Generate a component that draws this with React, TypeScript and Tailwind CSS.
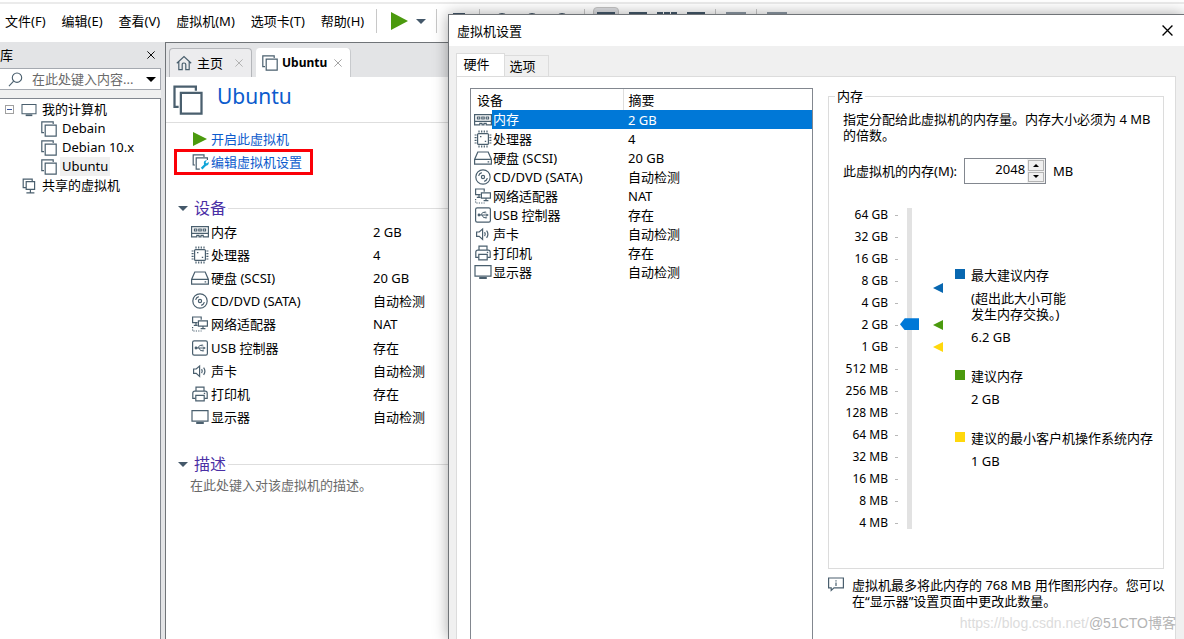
import React from 'react';

type IconProps = { className?: string };

const Svg: React.FC<IconProps & { box?: string; children: React.ReactNode }> = ({ className = 'h-4 w-[18px]', box = '0 0 18 16', children }) => (
  <svg viewBox={box} className={`shrink-0 ${className}`} fill="none" stroke="#4a5f6e" strokeWidth="1.2" aria-hidden="true">
    {children}
  </svg>
);

const MemoryIcon = () => (
  <Svg>
    <path d="M.6 2.6h16.8v10.2h-5.2v-1.4H10v1.4H8v-1.4H5.8v1.4H.6z" />
    <path d="M3.4 5h2.4v2H3.4zM7.8 5h2.4v2H7.8zM12.2 5h2.4v2h-2.4zM.6 9.4h16.8" />
  </Svg>
);

const CpuIcon = () => (
  <Svg box="0 0 18 18" className="h-[18px] w-[18px]">
    <rect x="3.6" y="3.6" width="10.8" height="10.8" rx="1" />
    <path d="M5 .6v2M7.7 .6v2M10.3 .6v2M13 .6v2M5 15.400v2M7.700 15.400v2M10.300 15.400v2M13 15.400v2M.6 5h2M.6 7.700h2M.6 10.300h2M.6 13h2M15.400 5h2M15.400 7.700h2M15.400 10.300h2M15.400 13h2" />
    <path d="M6 6.600h1.400M10.800 11.400h1.400" strokeWidth="1.400" />
  </Svg>
);

const DiskIcon = () => (
  <Svg>
    <path d="M3.8 2h10.4l3.2 7.400v4.800H.6V9.400zM.6 9.400h16.800M13.600 11.800h1.600" />
  </Svg>
);

const DiscIcon = () => (
  <Svg>
    <circle cx="9" cy="8" r="7.2" />
    <circle cx="9" cy="8" r="1.6" />
    <path d="M4.6 6.8a4.6 4.6 0 0 1 3.2-3.2M13.4 9.2a4.6 4.6 0 0 1-3.2 3.2" />
  </Svg>
);

const NetworkIcon = () => (
  <Svg>
    <path d="M6.600 6.600H1.600V1h8.600v2.800M5 6.600v2.600M2.800 9.400h3.800" />
    <path d="M7.4 4.8h9v5.400h-9zM12 10.200v2.400M9.600 12.600h4.800" />
    <path d="M1.600 11v4h9" strokeDasharray="1.2 1.2" />
  </Svg>
);

const UsbIcon = () => (
  <Svg>
    <rect x="1.6" y=".8" width="14.8" height="14.4" rx="1.6" />
    <path d="M5 8h8.6M6.8 8l2-2.6h2M8 8l1.6 2.6h2" strokeWidth="1" />
    <circle cx="5" cy="8" r=".8" fill="#4a5f6e" />
    <path d="M12.6 6.8L14.4 8l-1.800 1.200z" fill="#4a5f6e" strokeWidth=".4" />
    <path d="M10.600 4.800h1.200V6h-1.200zM11.400 10h1.200v1.200h-1.200z" strokeWidth=".6" />
  </Svg>
);

const SoundIcon = () => (
  <Svg>
    <path d="M2.600 6h2.600l3.400-3v10.400l-3.400-3H2.600zM10.600 6.200c.8 1.200.8 2.800 0 4M12.600 4.600c1.600 2.200 1.600 5 0 7.200" />
  </Svg>
);

const PrinterIcon = () => (
  <Svg>
    <path d="M5 5V1.200h8V5M4.600 12.400H1.800V7.200c0-1.200.8-2 2-2h10.400c1.200 0 2 .8 2 2v5.200h-2.800" />
    <path d="M4.800 9.400h8.400v5.400H4.800zM12.800 7.300h1.400" />
  </Svg>
);

const DisplayIcon: React.FC<IconProps> = ({ className }) => (
  <Svg className={className}>
    <path d="M1 1.600h16v10.600H1z" />
    <path d="M5.200 14h7.600" strokeWidth="2" />
  </Svg>
);

const MachineIcon: React.FC<IconProps> = ({ className = 'h-4 w-4' }) => (
  <Svg box="0 0 16 16" className={className}>
    <path d="M3 11.600H.8V.8h11.400V3" />
    <path d="M4.200 4.200h11v11h-11z" />
  </Svg>
);

const EditMachineIcon = () => (
  <Svg box="0 0 18 16" className="h-4 w-[18px]">
    <path d="M3 11H1.200V.8H12V3" />
    <path d="M15.400 6V3.800H4.200v11.400h3.600" />
    <path d="M9.600 14.600l4.200-4.200" stroke="#12a5d8" strokeWidth="2.200" />
    <path d="M16.600 7.800l-1.800 1.600-1.400-1.200 1.400-1.800c-1.600-.2-3 .8-3 2.600s1.200 2.800 2.600 2.600c1.600 0 2.800-1.800 2.200-3.800z" fill="#12a5d8" stroke="none" />
  </Svg>
);

const SharedIcon = () => (
  <Svg box="0 0 16 16" className="h-4 w-4">
    <path d="M4.600 9.600H2.200V1.200h9v1.800M5.200 3.600h8.400v7.800H5.200zM9.400 11.400v3.200M5.400 14.800h8" />
  </Svg>
);

const HomeIcon = () => (
  <Svg box="0 0 16 16" className="h-4 w-4">
    <path d="M.8 8.200L8 1.600l7.200 6.600M2.800 6.600v8h3.400V9.400c0-1 .8-1.400 1.800-1.400s1.800.4 1.800 1.400v5.200h3.400v-8" />
  </Svg>
);

const SearchIcon = () => (
  <Svg box="0 0 16 16" className="h-[15px] w-[15px]">
    <circle cx="9.600" cy="6" r="5" />
    <path d="M6 9.800L1 15" />
  </Svg>
);

const NoteIcon = () => (
  <Svg box="0 0 16 15" className="h-[15px] w-4">
    <path d="M.6 1h14.800v9.800H6L3.200 13.400v-2.600H.6z" />
    <path d="M8 3.200v1.200M8 5.400v3.600" />
  </Svg>
);

const CloseIcon: React.FC<IconProps> = ({ className }) => (
  <svg viewBox="0 0 10 10" className={`shrink-0 ${className}`} fill="none" stroke="currentColor" strokeWidth="1.2" aria-hidden="true">
    <path d="M.5.5l9 9M9.500.5l-9 9" />
  </svg>
);

const PlayIcon: React.FC<IconProps> = ({ className }) => (
  <svg viewBox="0 0 16 16" preserveAspectRatio="none" className={`shrink-0 ${className}`} aria-hidden="true">
    <path d="M0 0l16 8-16 8z" fill="#4b9a0e" />
  </svg>
);

const CaretIcon: React.FC<IconProps> = ({ className = 'h-[5px] w-[10px] text-[#44586a]' }) => (
  <svg viewBox="0 0 10 5" className={`shrink-0 ${className}`} aria-hidden="true">
    <path d="M0 0h10L5 5z" fill="currentColor" />
  </svg>
);

const menus = ['文件(F)', '编辑(E)', '查看(V)', '虚拟机(M)', '选项卡(T)', '帮助(H)'];

const devices = [
  { icon: <MemoryIcon />, name: '内存', summary: '2 GB' },
  { icon: <CpuIcon />, name: '处理器', summary: '4' },
  { icon: <DiskIcon />, name: '硬盘 (SCSI)', summary: '20 GB' },
  { icon: <DiscIcon />, name: 'CD/DVD (SATA)', summary: '自动检测' },
  { icon: <NetworkIcon />, name: '网络适配器', summary: 'NAT' },
  { icon: <UsbIcon />, name: 'USB 控制器', summary: '存在' },
  { icon: <SoundIcon />, name: '声卡', summary: '自动检测' },
  { icon: <PrinterIcon />, name: '打印机', summary: '存在' },
  { icon: <DisplayIcon />, name: '显示器', summary: '自动检测' },
];

const sizes = ['64 GB', '32 GB', '16 GB', '8 GB', '4 GB', '2 GB', '1 GB', '512 MB', '256 MB', '128 MB', '64 MB', '32 MB', '16 MB', '8 MB', '4 MB'];

// step is the number of scale rows below 64 GB
const markers = [
  { step: 3.3, color: 'text-[#0867b0]' },
  { step: 5, color: 'text-[#4b9a0e]' },
  { step: 6, color: 'text-[#ffd80c]' },
];

const hints = [
  { color: 'bg-[#0867b0]', title: '最大建议内存', note: ['(超出此大小可能', '发生内存交换。)'], value: '6.2 GB' },
  { color: 'bg-[#4b9a0e]', title: '建议内存', note: [], value: '2 GB' },
  { color: 'bg-[#ffd80c]', title: '建议的最小客户机操作系统内存', note: [], value: '1 GB' },
];

const Separator = () => <div className="h-6 w-px bg-[#c8c8c8]" />;

const MenuBar = () => (
  <header className="shrink-0 bg-white pt-[2px]">
    <div className="h-[2px] bg-[#ebebeb]" />
    <div className="flex h-[38px] items-center pb-1 pl-[5px]">
      <nav className="flex gap-4">
        {menus.map((menu) => (
          <button key={menu} type="button">{menu}</button>
        ))}
      </nav>
      <div className="ml-3 flex items-center">
        <Separator />
        <button type="button" aria-label="开启" className="ml-[14px]"><PlayIcon className="h-[18px] w-[17px]" /></button>
        <button type="button" aria-label="电源选项" className="ml-2"><CaretIcon /></button>
        <div className="ml-[10px]"><Separator /></div>
      </div>
      {/* rest of the toolbar, mostly covered by the settings window */}
      <div className="ml-4 flex items-center gap-[14px] text-[#44586a]">
        <div className="h-4 w-3 border border-current" />
        <Separator />
        <div className="h-4 w-4 rounded-full border border-current" />
        <div className="h-4 w-4 rounded-full border border-current" />
        <div className="h-4 w-4 rounded-full border border-current" />
        <Separator />
      </div>
      <div className="ml-2 flex items-center gap-[10px] text-[#44586a]">
        <div className="flex h-7 w-[26px] items-center justify-center rounded-sm border border-[#c4c4c4] bg-[#dcdde0]">
          <div className="h-[18px] w-[18px] border-2 border-current" />
        </div>
        <div className="h-[18px] w-[18px] border-2 border-current" />
        <div className="h-[18px] w-5 border-2 border-dashed border-current" />
        <div className="h-[18px] w-[18px] border-2 border-current" />
        <Separator />
        <div className="h-[18px] w-5 border-2 border-[#8d99a4]" />
        <Separator />
        <div className="h-[18px] w-5 border-2 border-[#8d99a4]" />
      </div>
    </div>
  </header>
);

const Library = () => (
  <aside className="flex w-[165px] shrink-0 flex-col bg-[#e3e4e6] pr-1">
    <div className="flex h-[26px] items-center justify-between pr-[6px]">
      <h2>库</h2>
      <button type="button" aria-label="关闭库"><CloseIcon className="h-2 w-2" /></button>
    </div>
    <div className="flex h-[22px] items-center border border-l-0 border-[#a5a9b0] bg-white pl-2 pr-1">
      <SearchIcon />
      <input aria-label="搜索" placeholder="在此处键入内容..." className="ml-[9px] w-0 flex-1 outline-none placeholder:text-[#6a6a6a]" />
      <button type="button" aria-label="筛选"><CaretIcon className="h-[5px] w-[10px] text-black" /></button>
    </div>
    <div className="h-2 bg-[#f0f0f0]" />
    <ul className="flex-1 border-r border-t border-[#82878f] bg-white pt-px leading-[19px]">
      <li>
        <div className="flex items-center pl-[5px]">
          <button type="button" aria-label="折叠" className="flex h-[9px] w-[9px] items-center justify-center border border-[#a0a0a0]">
            <span className="h-px w-[5px] bg-[#3a56a0]" />
          </button>
          <DisplayIcon className="ml-[7px] h-[14px] w-4" />
          <span className="ml-[5px]">我的计算机</span>
        </div>
        <ul>
          {['Debain', 'Debian 10.x', 'Ubuntu'].map((name) => (
            <li key={name} className="flex items-center pl-[41px]">
              <MachineIcon />
              <span className={name === 'Ubuntu' ? 'ml-[3px] bg-[#f0f0f0] px-[2px]' : 'ml-[3px] px-[2px]'}>{name}</span>
            </li>
          ))}
        </ul>
      </li>
      <li className="flex items-center pl-[21px]">
        <SharedIcon />
        <span className="ml-[5px]">共享的虚拟机</span>
      </li>
    </ul>
  </aside>
);

const SectionTitle: React.FC<{ title: string }> = ({ title }) => (
  <h2 className="flex h-6 items-center pl-3 text-base text-[#4a2fa5]">
    <CaretIcon />
    <span className="ml-[6px]">{title}</span>
    <span className="ml-[2px] h-px flex-1 bg-[#dedede]" />
  </h2>
);

const MachinePage = () => (
  <main className="flex min-w-0 flex-1 flex-col border-l border-t border-[#707478] bg-white">
    <div className="flex h-[34px] items-end bg-[#e3e4e6] pl-[3px]">
      <div className="flex h-[29px] w-[83px] items-center rounded-t border border-b-0 border-[#b4b6ba] bg-[#ececee] pl-[6px] pr-2">
        <HomeIcon />
        <span className="ml-[5px] flex-1">主页</span>
        <button type="button" aria-label="关闭主页" className="text-[#b0b0b0]"><CloseIcon className="h-2 w-2" /></button>
      </div>
      <div className="ml-1 flex h-[29px] w-[95px] items-center rounded-t border-r border-[#c8cacd] bg-white pl-[6px] pr-2">
        <MachineIcon />
        <span className="ml-1 flex-1 text-xs font-bold">Ubuntu</span>
        <button type="button" aria-label="关闭 Ubuntu" className="text-[#a0a0a0]"><CloseIcon className="h-2 w-2" /></button>
      </div>
    </div>
    <div className="flex h-[46px] items-center border-b border-[#dedede] pl-[7px]">
      <MachineIcon className="h-[30px] w-[30px]" />
      <h1 className="ml-[14px] pb-2 text-[21px] leading-7 text-[#0c5bcd]">Ubuntu</h1>
    </div>
    <div className="flex flex-col items-start pl-2 pt-[5px] text-[#0c5bcd]">
      <a href="#start" className="flex h-[21px] items-center pl-[19px]">
        <PlayIcon className="h-[14px] w-[14px]" />
        <span className="ml-1">开启此虚拟机</span>
      </a>
      <a href="#edit" className="flex h-[26px] items-center border-[3px] border-[#fb0007] pb-px pl-[15px] pr-2">
        <EditMachineIcon />
        <span className="ml-px">编辑虚拟机设置</span>
      </a>
    </div>
    <section className="mt-[21px]">
      <SectionTitle title="设备" />
      <table className="h-[209px] w-full table-fixed">
        <tbody>
          {devices.map((device) => (
            <tr key={device.name}>
              <td className="w-[207px] p-0 pl-[25px]">
                <div className="flex items-center gap-[2px]">{device.icon}{device.name}</div>
              </td>
              <td className="p-0">{device.summary}</td>
            </tr>
          ))}
        </tbody>
      </table>
    </section>
    <section className="mt-[23px]">
      <SectionTitle title="描述" />
      <p className="pl-6 text-[#6a6a6a]">在此处键入对该虚拟机的描述。</p>
    </section>
  </main>
);

const DeviceTable = () => (
  <div className="w-[343px] shrink-0 border border-b-0 border-[#82878f]">
    <table className="w-full table-fixed">
      <thead>
        <tr className="h-[21px] text-left">
          <th className="w-[152px] border-r border-[#dedede] p-0 pl-[6px] font-normal">设备</th>
          <th className="p-0 pl-[5px] font-normal">摘要</th>
        </tr>
      </thead>
      <tbody>
        {devices.map((device, index) => (
          <tr key={device.name} className={index === 0 ? 'h-[19px] text-white' : 'h-[19px]'}>
            <td className="p-0 pl-[3px]">
              <div className="flex h-[19px] items-center">
                {device.icon}
                <span className={index === 0 ? 'flex-1 bg-[#0078d7] pl-px leading-[19px]' : 'pl-px'}>{device.name}</span>
              </div>
            </td>
            <td className={index === 0 ? 'bg-[#0078d7] p-0 pl-[5px]' : 'p-0 pl-[5px]'}>{device.summary}</td>
          </tr>
        ))}
      </tbody>
    </table>
  </div>
);

const MemoryPanel = () => (
  <div className="min-w-0 flex-1 leading-4">
    <fieldset className="mr-[3px] border border-[#dcdcdc] pb-[34px] pl-[14px] pr-[10px]">
      <legend className="-ml-2 px-[2px]">内存</legend>
      <p className="mt-[7px]">指定分配给此虚拟机的内存量。内存大小必须为 4 MB 的倍数。</p>
      <div className="mt-[15px] flex items-center">
        <label htmlFor="memory">此虚拟机的内存(M):</label>
        <div className="ml-[7px] flex h-[26px] w-[82px] border border-[#82878f]">
          <input id="memory" defaultValue="2048" className="w-0 flex-1 pb-1 pr-[2px] text-right outline-none" />
          <div className="flex w-[18px] flex-col gap-px bg-[#f0f0f0] p-px">
            <button type="button" aria-label="增加" className="flex flex-1 items-center justify-center border border-[#b4b4b4]">
              <CaretIcon className="h-[3px] w-[6px] rotate-180" />
            </button>
            <button type="button" aria-label="减少" className="flex flex-1 items-center justify-center border border-[#b4b4b4]">
              <CaretIcon className="h-[3px] w-[6px]" />
            </button>
          </div>
        </div>
        <span className="ml-[7px]">MB</span>
      </div>
      <div className="mt-5 flex">
        <ul className="text-xs">
          {sizes.map((size) => (
            <li key={size} className="flex h-[22px] items-center gap-[7px]">
              <span className="w-[45px] text-right">{size}</span>
              <span className="h-px w-[3px] bg-[#b8b8b8]" />
            </li>
          ))}
        </ul>
        <input
          type="range"
          min={0}
          max={14}
          defaultValue={9}
          aria-label="内存大小"
          className="ml-[2px] mt-1 h-[321px] w-[19px] appearance-none bg-[linear-gradient(#e2e2e2,#e2e2e2)] bg-[length:5px_100%] bg-center bg-no-repeat [direction:rtl] [writing-mode:vertical-lr] [&::-webkit-slider-thumb]:h-3 [&::-webkit-slider-thumb]:w-[19px] [&::-webkit-slider-thumb]:appearance-none [&::-webkit-slider-thumb]:bg-[#0078d7] [&::-webkit-slider-thumb]:[clip-path:polygon(0_50%,25%_0,100%_0,100%_100%,25%_100%)]"
        />
        <div className="relative ml-[14px] w-[10px]">
          {markers.map((marker) => (
            <svg key={marker.step} viewBox="0 0 10 10" className={`absolute h-[10px] w-[10px] ${marker.color}`} style={{ top: Math.round(marker.step * 22) + 6 }} aria-hidden="true">
              <path d="M10 0v10L0 5z" fill="currentColor" />
            </svg>
          ))}
        </div>
        <ul className="ml-3 flex flex-col gap-[23px] whitespace-nowrap pt-[63px]">
          {hints.map((hint) => (
            <li key={hint.title} className="flex gap-[6px]">
              <span className={`mt-[2px] h-[10px] w-[10px] shrink-0 ${hint.color}`} />
              <div className="flex flex-col gap-[7px]">
                <p>{hint.title}</p>
                {hint.note.length > 0 && (
                  <p>{hint.note[0]}<br />{hint.note[1]}</p>
                )}
                <p>{hint.value}</p>
              </div>
            </li>
          ))}
        </ul>
      </div>
    </fieldset>
    <div className="mt-2 flex items-start gap-2">
      <NoteIcon />
      <p>虚拟机最多将此内存的 768 MB 用作图形内存。您可以在“显示器”设置页面中更改此数量。</p>
    </div>
  </div>
);

const SettingsDialog = () => (
  <div role="dialog" aria-label="虚拟机设置" className="absolute bottom-0 left-[448px] right-0 top-[14px] flex flex-col border-l border-t border-[#707478] bg-[#f0f0f0] shadow-[0_0_14px_rgba(0,0,0,0.35)]">
    <div className="flex h-[31px] shrink-0 items-center justify-between bg-white pl-2 pr-[11px]">
      <h2>虚拟机设置</h2>
      <button type="button" aria-label="关闭"><CloseIcon className="h-[11px] w-[11px]" /></button>
    </div>
    <div className="flex h-[30px] shrink-0 items-end pl-[7px]">
      <button type="button" className="h-[23px] w-[49px] border border-b-0 border-[#dcdcdc] bg-white pb-[2px] pr-2">硬件</button>
      <button type="button" className="h-[21px] w-11 border border-b-0 border-l-0 border-[#dcdcdc] pr-2">选项</button>
    </div>
    <div className="ml-[7px] mr-2 flex flex-1 gap-[15px] border-x border-t border-[#dcdcdc] bg-white pl-[13px] pr-2 pt-[11px]">
      <DeviceTable />
      <MemoryPanel />
    </div>
  </div>
);

const App: React.FC = () => {
  return (
    <div className="relative flex h-screen flex-col overflow-hidden bg-white font-['Noto_Sans','Noto_Sans_CJK_SC',sans-serif] text-[13px] leading-[18px] text-black">
      <MenuBar />
      <div className="flex min-h-0 flex-1">
        <Library />
        <MachinePage />
      </div>
      <SettingsDialog />
      <div className="absolute bottom-[6px] right-2 flex whitespace-nowrap font-['Liberation_Sans','Noto_Sans_CJK_SC',sans-serif] text-sm">
        <span className="text-[#dcdcdc]">https://blog.csdn.net/</span>
        <span className="text-[#b4b4b4]">@51CTO博客</span>
      </div>
    </div>
  );
};

export default App;
